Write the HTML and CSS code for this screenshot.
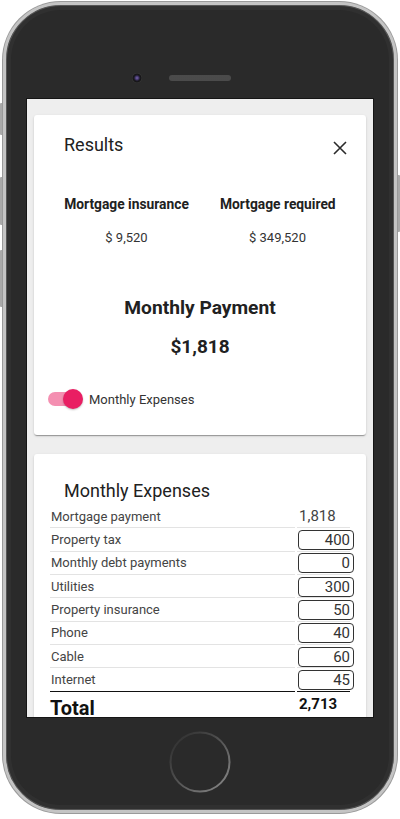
FILE: index.html
```html
<!DOCTYPE html>
<html lang="en">
<head>
<meta charset="utf-8">
<title>Results</title>
<link rel="stylesheet" href="styles.css">
</head>
<body>
<div class="device">
  <span class="side-btn mute"></span>
  <span class="side-btn vol-up"></span>
  <span class="side-btn vol-down"></span>
  <span class="side-btn power"></span>
  <div class="phone">
    <div class="phone-top">
      <span class="camera"></span>
      <span class="speaker"></span>
    </div>
    <div class="screen">
      <section class="card results">
        <div class="results-head">
          <h2 class="results-title">Results</h2>
          <svg class="close" width="14" height="14" viewBox="0 0 14 14"><path d="M1 1L13 13M13 1L1 13" stroke="#2b2b2b" stroke-width="1.6" fill="none"/></svg>
        </div>
        <div class="summary">
          <div class="summary-col">
            <div class="summary-label">Mortgage insurance</div>
            <div class="summary-value">$ 9,520</div>
          </div>
          <div class="summary-col">
            <div class="summary-label">Mortgage required</div>
            <div class="summary-value">$ 349,520</div>
          </div>
        </div>
        <div class="payment-title">Monthly Payment</div>
        <div class="payment-value">$1,818</div>
        <div class="toggle-row">
          <span class="toggle"><span class="toggle-thumb"></span></span>
          <span class="toggle-label">Monthly Expenses</span>
        </div>
      </section>
      <section class="card expenses">
        <h2 class="expenses-title">Monthly Expenses</h2>
        <div class="exp-table">
          <div class="exp-label">Mortgage payment</div><div class="exp-val"><span class="plain">1,818</span></div>
          <div class="exp-label">Property tax</div><div class="exp-val"><span class="box">400</span></div>
          <div class="exp-label">Monthly debt payments</div><div class="exp-val"><span class="box">0</span></div>
          <div class="exp-label">Utilities</div><div class="exp-val"><span class="box">300</span></div>
          <div class="exp-label">Property insurance</div><div class="exp-val"><span class="box">50</span></div>
          <div class="exp-label">Phone</div><div class="exp-val"><span class="box">40</span></div>
          <div class="exp-label">Cable</div><div class="exp-val"><span class="box">60</span></div>
          <div class="exp-label last">Internet</div><div class="exp-val last"><span class="box">45</span></div>
          <div class="total-label">Total</div><div class="total-val">2,713</div>
        </div>
      </section>
    </div>
    <div class="phone-bottom">
      <svg class="home" width="64" height="64" viewBox="0 0 64 64">
        <defs>
          <linearGradient id="ring" x1="0" y1="0" x2="1" y2="1">
            <stop offset="0" stop-color="#2b2b2b"/>
            <stop offset="0.4" stop-color="#4a4a4a"/>
            <stop offset="1" stop-color="#8c8c8c"/>
          </linearGradient>
        </defs>
        <circle cx="32" cy="32" r="29.5" fill="none" stroke="url(#ring)" stroke-width="2"/>
      </svg>
    </div>
  </div>
</div>
</body>
</html>
```
FILE: styles.css
```css
* { box-sizing: border-box; }
html, body { margin: 0; padding: 0; }
body {
  background: #ffffff;
  font-family: Roboto, "Liberation Sans", Arial, sans-serif;
  width: 400px;
  height: 819px;
  overflow: hidden;
}
.device {
  position: relative;
  width: 400px;
  height: 819px;
  padding: 2px 3px 0 3px;
}
.side-btn {
  position: absolute;
  width: 4px;
  background: #a9a9a9;
  border-radius: 1px;
}
.mute { left: 0; top: 103px; height: 32px; }
.vol-up { left: 0; top: 177px; height: 48px; }
.vol-down { left: 0; top: 250px; height: 57px; }
.power { right: 0; top: 175px; height: 57px; }

.phone {
  position: relative;
  width: 394px;
  height: 811px;
  border: 3px solid #c4c4c4;
  border-radius: 58px;
  background: #2a2a2a;
  box-shadow: 0 0 0 1px #9a9a9a, inset 0 0 0 1px #555, inset 0 0 0 5px #303030;
  padding: 0 20px;
  display: flex;
  flex-direction: column;
}
.phone-top {
  height: 93px;
  padding: 42px 37px 0 0;
  display: flex;
  justify-content: center;
  align-items: center;
  gap: 27px;
}
.phone-top > * { flex: none; }
.camera {
  width: 10px;
  height: 10px;
  border-radius: 50%;
  background: radial-gradient(circle at 50% 50%, #7a6aa8 0, #4b3d78 1.5px, #1c1a24 3px, #151515 4px, #3a3a3a 5px);
  margin-top: 10px;
}
.speaker {
  width: 62px;
  height: 6px;
  border-radius: 3px;
  background: #585858;
  background-image: radial-gradient(#3c3c3c 0.6px, transparent 0.8px);
  background-size: 2px 2px;
  margin-top: 10px;
}
.screen {
  width: 348px;
  height: 620px;
  flex: none;
  background: #eeeeee;
  border: 1px solid #151515;
  padding: 16px 7px;
  overflow: hidden;
  display: flex;
  flex-direction: column;
  gap: 19px;
}
.card {
  background: #ffffff;
  border-radius: 3px;
  box-shadow: 0 2px 1px -1px rgba(0,0,0,.2), 0 1px 1px 0 rgba(0,0,0,.14), 0 1px 3px 0 rgba(0,0,0,.12);
  flex: none;
}
.results {
  height: 320px;
  padding-top: 19px;
}
.results-head {
  display: flex;
  justify-content: space-between;
  align-items: flex-start;
  padding: 0 19px 0 30px;
  height: 22px;
}
.results-title {
  margin: 0;
  font-size: 18px;
  line-height: 22px;
  font-weight: 400;
  color: #212121;
}
.close { margin-top: 7px; }
.summary {
  margin-top: 40px;
  padding-left: 30px;
  display: grid;
  grid-template-columns: 125px 115px;
  column-gap: 31px;
  text-align: center;
}
.summary-label {
  font-size: 13.8px;
  line-height: 16px;
  font-weight: 700;
  color: #212121;
  white-space: nowrap;
}
.summary-value {
  margin-top: 18px;
  font-size: 13px;
  line-height: 16px;
  color: #333;
  white-space: nowrap;
}
.payment-title {
  margin-top: 50px;
  text-align: center;
  font-size: 19.2px;
  line-height: 24px;
  font-weight: 700;
  color: #212121;
}
.payment-value {
  margin-top: 15px;
  text-align: center;
  font-size: 19px;
  line-height: 24px;
  font-weight: 700;
  color: #212121;
}
.toggle-row {
  margin-top: 30px;
  padding-left: 14px;
  height: 20px;
  display: flex;
  align-items: center;
  gap: 7px;
}
.toggle {
  width: 34px;
  height: 14px;
  border-radius: 7px;
  background: #f48fb1;
  display: flex;
  justify-content: flex-end;
  align-items: center;
}
.toggle-thumb {
  width: 20px;
  height: 20px;
  border-radius: 50%;
  background: #e91e63;
  margin-right: -1px;
  box-shadow: 0 1px 2px rgba(0,0,0,.25);
}
.toggle-label {
  font-size: 13px;
  color: #333;
}
.expenses {
  padding: 26px 11px 0 16px;
  height: 300px;
}
.expenses-title {
  margin: 0 0 3px 14px;
  font-size: 18px;
  line-height: 22px;
  font-weight: 400;
  color: #212121;
}
.exp-table {
  display: grid;
  grid-template-columns: 245px 53px;
  grid-auto-rows: 23.33px;
  column-gap: 2px;
}
.exp-label, .exp-val {
  border-bottom: 1px solid #e3e3e3;
  display: flex;
  align-items: center;
}
.exp-label {
  font-size: 13px;
  color: #444;
  padding-left: 1px;
}
.exp-val { overflow: visible; }
.exp-label.last, .exp-val.last { border-bottom-color: #111; }
.plain {
  font-size: 15px;
  color: #444;
  padding-left: 2px;
}
.box {
  flex: none;
  width: 56px;
  height: 20px;
  margin-left: 1px;
  margin-top: 1px;
  border: 1px solid #333;
  border-radius: 4px;
  font-size: 15px;
  line-height: 18px;
  color: #333;
  text-align: right;
  padding-right: 3px;
}
.total-label {
  padding-top: 4px;
  font-size: 20px;
  line-height: 24px;
  font-weight: 700;
  color: #111;
}
.total-val {
  padding: 3px 0 0 2px;
  font-size: 15px;
  line-height: 18px;
  font-weight: 700;
  color: #111;
}
.phone-bottom {
  flex: 1;
  display: flex;
  justify-content: center;
  padding-top: 12px;
}
```
